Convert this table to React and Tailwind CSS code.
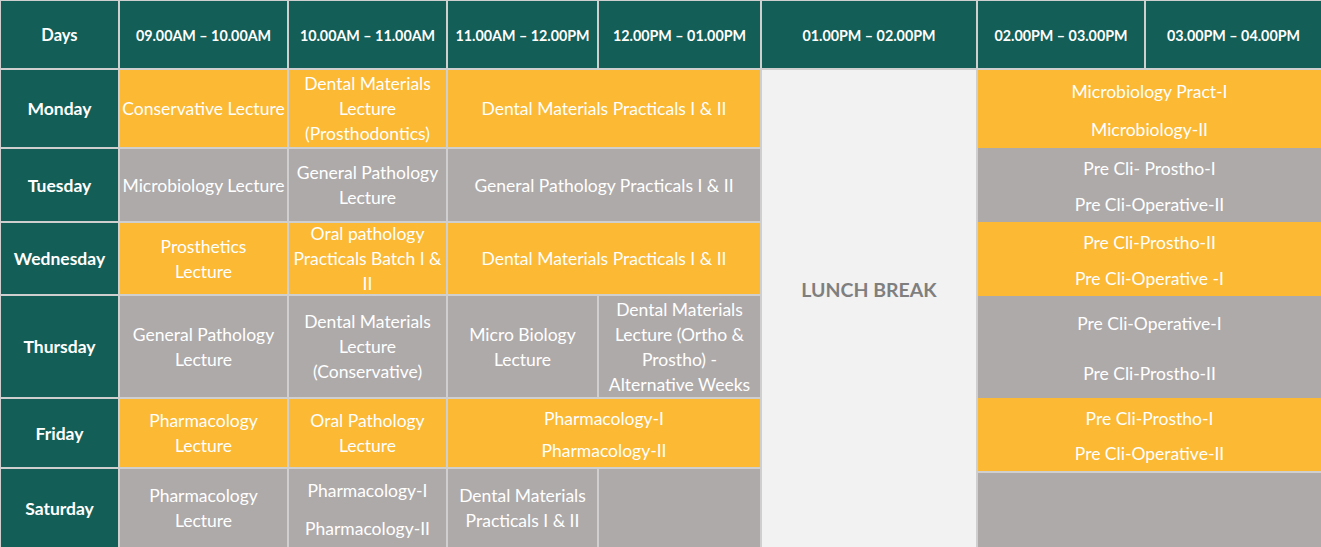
import React from "react";

const OR = "bg-[#fbb934]";
const GR = "bg-[#aeaaaa]";

function Cell({ bg, className = "", children }) {
  return (
    <div
      className={`${bg} flex flex-col items-center justify-center text-center text-white text-[17.5px] leading-[25px] whitespace-nowrap ${className}`}
    >
      {children}
    </div>
  );
}

function Day({ children }) {
  return (
    <div className="bg-[#135e57] flex items-center justify-center text-white font-bold text-[17.5px] pt-[2px]">
      {children}
    </div>
  );
}

function Head({ children }) {
  return (
    <div className="bg-[#135e57] flex items-center justify-center text-white font-bold text-[14.3px] whitespace-nowrap pt-[2px]">
      {children}
    </div>
  );
}

function Pair({ bg, a, b, className = "" }) {
  return (
    <div
      className={`${bg} flex flex-col items-center justify-around text-center text-white text-[17.5px] leading-[25px] whitespace-nowrap pt-[3px] ${className}`}
    >
      <div>{a}</div>
      <div>{b}</div>
    </div>
  );
}

export default function App() {
  return (
    <div
      className="w-[1321px] h-[547px] bg-[#cfcfcf] pt-px pl-px overflow-hidden"
      style={{ fontFamily: "Lato, 'Open Sans', sans-serif" }}
    >
      <div className="grid grid-cols-[117px_167px_157px_149px_161px_214px_166px_175px] grid-rows-[67px_77px_72px_71px_101px_68px_78px] gap-[2px]">
        <Head>
          <span className="text-[16.5px]">Days</span>
        </Head>
        <Head>09.00AM – 10.00AM</Head>
        <Head>10.00AM – 11.00AM</Head>
        <Head>11.00AM – 12.00PM</Head>
        <Head>12.00PM – 01.00PM</Head>
        <Head>01.00PM – 02.00PM</Head>
        <Head>02.00PM – 03.00PM</Head>
        <Head>03.00PM – 04.00PM</Head>

        {/* Lunch */}
        <div className="col-start-6 row-start-2 row-span-6 bg-[#f2f2f2] flex items-center justify-center pb-[38px]">
          <span className="text-[#7f7f7f] font-bold text-[19.5px]">LUNCH BREAK</span>
        </div>

        {/* Afternoon */}
        <div className="col-start-7 col-span-2 row-start-2 row-span-6 flex flex-col">
          <Pair bg={OR} className="h-[78px]" a="Microbiology Pract-I" b="Microbiology-II" />
          <Pair bg={GR} className="h-[74px]" a="Pre Cli- Prostho-I" b="Pre Cli-Operative-II" />
          <Pair bg={OR} className="h-[74px]" a="Pre Cli-Prostho-II" b="Pre Cli-Operative -I" />
          <Pair bg={GR} className="h-[102px]" a="Pre Cli-Operative-I" b="Pre Cli-Prostho-II" />
          <Pair bg={OR} className="h-[70px] border-b-2 border-[#cfcfcf] box-content" a="Pre Cli-Prostho-I" b="Pre Cli-Operative-II" />
          <div className={`${GR} flex-1`} />
        </div>

        {/* Monday */}
        <Day>Monday</Day>
        <Cell bg={OR}>Conservative Lecture</Cell>
        <Cell bg={OR}>
          <span>Dental Materials</span>
          <span>Lecture</span>
          <span>(Prosthodontics)</span>
        </Cell>
        <Cell bg={OR} className="col-span-2">Dental Materials Practicals I &amp; II</Cell>

        {/* Tuesday */}
        <Day>Tuesday</Day>
        <Cell bg={GR}>Microbiology Lecture</Cell>
        <Cell bg={GR}>
          <span>General Pathology</span>
          <span>Lecture</span>
        </Cell>
        <Cell bg={GR} className="col-span-2">General Pathology Practicals I &amp; II</Cell>

        {/* Wednesday */}
        <Day>Wednesday</Day>
        <Cell bg={OR}>
          <span>Prosthetics</span>
          <span>Lecture</span>
        </Cell>
        <Cell bg={OR} className="justify-start">
          <span className="-mt-[2px]">Oral pathology</span>
          <span>Practicals Batch I &amp;</span>
          <span>II</span>
        </Cell>
        <Cell bg={OR} className="col-span-2">Dental Materials Practicals I &amp; II</Cell>

        {/* Thursday */}
        <Day>Thursday</Day>
        <Cell bg={GR}>
          <span>General Pathology</span>
          <span>Lecture</span>
        </Cell>
        <Cell bg={GR}>
          <span>Dental Materials</span>
          <span>Lecture</span>
          <span>(Conservative)</span>
        </Cell>
        <Cell bg={GR}>
          <span>Micro Biology</span>
          <span>Lecture</span>
        </Cell>
        <Cell bg={GR}>
          <span>Dental Materials</span>
          <span>Lecture (Ortho &amp;</span>
          <span>Prostho) -</span>
          <span>Alternative Weeks</span>
        </Cell>

        {/* Friday */}
        <Day>Friday</Day>
        <Cell bg={OR}>
          <span>Pharmacology</span>
          <span>Lecture</span>
        </Cell>
        <Cell bg={OR}>
          <span>Oral Pathology</span>
          <span>Lecture</span>
        </Cell>
        <Pair bg={OR} className="col-span-2" a="Pharmacology-I" b="Pharmacology-II" />

        {/* Saturday */}
        <Day>Saturday</Day>
        <Cell bg={GR}>
          <span>Pharmacology</span>
          <span>Lecture</span>
        </Cell>
        <Pair bg={GR} a="Pharmacology-I" b="Pharmacology-II" />
        <Cell bg={GR}>
          <span>Dental Materials</span>
          <span>Practicals I &amp; II</span>
        </Cell>
        <Cell bg={GR} />
      </div>
    </div>
  );
}
